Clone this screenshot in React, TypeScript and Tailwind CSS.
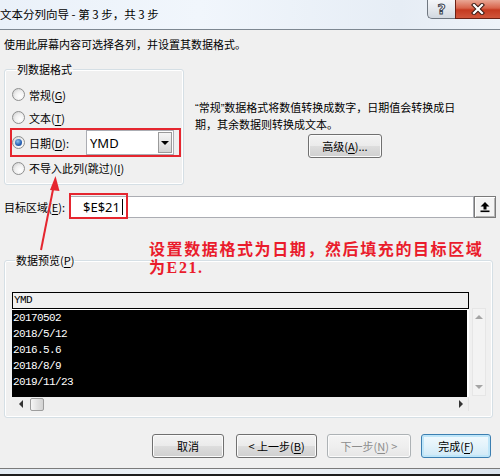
import React from 'react';

const U = ({ children }: { children: React.ReactNode }) => (
  <span className="underline underline-offset-[2px] decoration-1">{children}</span>
);

const Radio = ({ checked }: { checked?: boolean }) => (
  <span className="w-[13px] h-[13px] rounded-full border border-[#8e8f8f] bg-[radial-gradient(circle_at_65%_65%,#ffffff,#f1f1f1_45%,#c9c9c9)] flex items-center justify-center shrink-0">
    {checked && (
      <span className="w-[7px] h-[7px] rounded-full bg-[radial-gradient(circle_at_40%_35%,#8fc3ec,#2a64b7_55%,#17418a)]" />
    )}
  </span>
);

const btn =
  'h-[24px] flex items-center justify-center rounded-[3px] border text-[11px] leading-[14px] shadow-[inset_0_0_0_1px_#fbfbfb]';
const btnFace = 'bg-[linear-gradient(#f3f3f3,#ebebeb_48%,#dddddd_52%,#cfcfcf)] border-[#707070] text-black';

const Tri = ({ dir, color }: { dir: 'up' | 'down' | 'left' | 'right'; color: string }) => {
  const pts = {
    up: '0,4 4,0 8,4',
    down: '0,0 8,0 4,4',
    left: '4,0 4,8 0,4',
    right: '0,0 0,8 4,4',
  }[dir];
  const vb = dir === 'up' || dir === 'down' ? '0 0 8 4' : '0 0 4 8';
  const cls = dir === 'up' || dir === 'down' ? 'w-[8px] h-[4px]' : 'w-[4px] h-[8px]';
  return (
    <svg viewBox={vb} className={cls}>
      <polygon points={pts} fill={color} />
    </svg>
  );
};

export default function App() {
  const rows = ['20170502', '2018/5/12', '2016.5.6', '2018/8/9', '2019/11/23'];

  return (
    <div className="w-[500px] h-[476px] relative overflow-hidden bg-[#f0f0f0] flex flex-col font-['Noto_Sans_CJK_SC',sans-serif] text-black">
      {/* title bar */}
      <div className="h-[30px] shrink-0 border-b border-[#7d8791] bg-[linear-gradient(to_right,#eaf1f9,#f1f6fc_40%,#e6edf5_80%,#eef3f9)] flex items-start relative">
        <div className="text-[11.5px] leading-[16px] mt-[6px] whitespace-nowrap">文本分列向导 - 第 3 步，共 3 步</div>
        <div className="ml-auto flex">
          <div className="w-[28px] h-[19px] rounded-bl-[5px] border-l border-b border-[#6f7780] bg-[linear-gradient(#f4f6f9,#e4e8ed_50%,#d2d8df)] flex items-center justify-center">
            <span className="text-[14px] leading-[14px] font-bold text-white font-['DejaVu_Sans',sans-serif] [-webkit-text-stroke:1px_#3c4450]">?</span>
          </div>
          <div className="w-[45px] h-[19px] border-l border-b border-[#6b2114] bg-[linear-gradient(#e9a795,#d8644b_45%,#c53a20_55%,#d0563b)] flex items-center justify-center">
            <svg viewBox="0 0 14 12" className="w-[14px] h-[12px]">
              <path d="M3 2 L11 10 M11 2 L3 10" stroke="#3a1a14" strokeWidth="4.2" strokeLinecap="square" />
              <path d="M3 2 L11 10 M11 2 L3 10" stroke="#ffffff" strokeWidth="2.2" strokeLinecap="square" />
            </svg>
          </div>
        </div>
      </div>

      {/* body */}
      <div className="flex-1 px-[4px] flex flex-col">
        <div className="mt-[6px] text-[11px] leading-[16px] whitespace-nowrap">使用此屏幕内容可选择各列，并设置其数据格式。</div>

        <div className="mt-[9px] flex">
          <fieldset className="w-[180px] h-[124px] border border-[#d5dfe5] rounded-[3px] pl-[7px] pt-[6px] shadow-[inset_0_0_0_1px_#ffffff]">
            <legend className="ml-[4px] px-[1px] text-[11px] leading-[16px]">列数据格式</legend>
            <div className="h-[23px] flex items-center">
              <Radio />
              <span className="ml-[4px] text-[11px] leading-[14px]">常规(<U>G</U>)</span>
            </div>
            <div className="h-[23px] flex items-center">
              <Radio />
              <span className="ml-[4px] text-[11px] leading-[14px]">文本(<U>T</U>)</span>
            </div>
            <div className="h-[27px] flex items-center relative">
              <Radio checked />
              <span className="ml-[4px] w-[57px] text-[11px] leading-[14px]">日期(<U>D</U>):</span>
              <div className="w-[88px] h-[25px] border border-[#abadb3] bg-white flex items-center">
                <span className="ml-[3px] text-[13px] leading-[16px] font-['Noto_Sans',sans-serif]">YMD</span>
                <div className="ml-auto mr-[1px] w-[14px] h-[21px] border border-[#9a9a9a] bg-[linear-gradient(#f5f5f5,#e6e6e6_50%,#d4d4d4)] flex items-center justify-center">
                  <Tri dir="down" color="#000" />
                </div>
              </div>
              <div className="absolute -left-[2px] -top-[1px] w-[171px] h-[29px] border-2 border-[#e5262f]" />
            </div>
            <div className="h-[24px] flex items-center">
              <Radio />
              <span className="ml-[4px] text-[11px] leading-[14px] whitespace-nowrap">不导入此列(跳过)(<U>I</U>)</span>
            </div>
          </fieldset>

          <div className="ml-[11px] flex flex-col">
            <div className="mt-[38px] text-[11px] leading-[16px] whitespace-nowrap">
              <span className="font-['Liberation_Sans',sans-serif]">“</span>常规<span className="font-['Liberation_Sans',sans-serif]">”</span>数据格式将数值转换成数字，日期值会转换成日
              <br />
              期，其余数据则转换成文本。
            </div>
            <div className={`${btn} ${btnFace} mt-[2px] ml-[113px] w-[74px]`}>
              高级(<U>A</U>)...
            </div>
          </div>
        </div>

        {/* target range */}
        <div className="mt-[11px] h-[22px] flex items-center">
          <span className="w-[66px] text-[11px] leading-[14px] whitespace-nowrap">目标区域(<U>E</U>):</span>
          <div className="flex-1 h-[22px] relative border border-[#abadb3] bg-white flex items-center">
            <span className="ml-[12px] text-[13px] leading-[16px] font-['Noto_Sans',sans-serif]">$E$21</span>
            <span className="ml-[2px] w-[1px] h-[16px] bg-black" />
            <div className="absolute -left-[2px] -top-[4px] w-[59px] h-[26px] border-2 border-[#e5262f]" />
          </div>
          <div className="w-[22px] h-[22px] border border-[#7a7a7a] bg-[#f4f4f4] shadow-[inset_1px_1px_0_#ffffff,inset_-1px_-1px_0_#b5b5b5] flex items-center justify-center">
            <svg viewBox="0 0 12 12" className="w-[12px] h-[12px]">
              <polygon points="6,1 10.5,5.5 7.5,5.5 7.5,8.5 4.5,8.5 4.5,5.5 1.5,5.5" fill="#000" />
              <rect x="1.5" y="9.5" width="9" height="1.6" fill="#000" />
            </svg>
          </div>
        </div>

        {/* preview */}
        <fieldset className="mt-[34px] w-[489px] h-[166px] border border-[#d5dfe5] rounded-[3px] pl-[7px] pt-[24px] shadow-[inset_0_0_0_1px_#ffffff]">
          <legend className="ml-[3px] px-[1px] text-[11px] leading-[16px]">数据预览(<U>P</U>)</legend>
          <div className="flex">
            <div className="w-[457px] flex flex-col">
              <div className="h-[17px] border border-black bg-[#f0f0f0] pl-[1px] text-[11px] leading-[15px] tracking-[-0.6px] font-['Liberation_Mono',monospace]">
                YMD
              </div>
              <div className="bg-white pt-[1px] pr-[2px]">
                <div className="h-[87px] bg-black text-white pl-[1px] text-[11px] leading-[16px] tracking-[-0.6px] font-['Liberation_Mono',monospace]">
                  {rows.map((r) => (
                    <div key={r}>{r}</div>
                  ))}
                </div>
              </div>
              <div className="h-[14px] bg-[#efefef] border-r border-[#e4e4e4] flex items-center">
                <div className="ml-[7px]">
                  <Tri dir="left" color="#333" />
                </div>
                <div className="ml-[7px] w-[14px] h-[13px] rounded-[2px] border border-[#9d9d9d] bg-[linear-gradient(to_right,#f6f6f6,#e3e3e3_50%,#d3d3d3)]" />
                <div className="ml-auto mr-[5px]">
                  <Tri dir="right" color="#333" />
                </div>
              </div>
            </div>
            <div className="ml-[3px] mt-[16px] w-[14px] h-[88px] bg-[#f3f3f3] border border-[#e6e6e6] flex flex-col items-center justify-between py-[6px]">
              <Tri dir="up" color="#a5a5a5" />
              <Tri dir="down" color="#a5a5a5" />
            </div>
          </div>
        </fieldset>

        {/* buttons */}
        <div className="mt-[16px] flex justify-end pr-[5px]">
          <div className={`${btn} ${btnFace} w-[72px]`}>取消</div>
          <div className={`${btn} ${btnFace} ml-[12px] w-[81px]`}>&lt; 上一步(<U>B</U>)</div>
          <div className={`${btn} ml-[10px] w-[84px] border-[#adb2b5] bg-[linear-gradient(#f4f4f4,#efefef_50%,#e6e6e6)] text-[#8d8d8d]`}>
            下一步(<U>N</U>) &gt;
          </div>
          <div className={`${btn} ml-[10px] w-[70px] border-[#3c7fb1] bg-[linear-gradient(#f1f9fd,#e3f3fb_50%,#cfe9f7)] shadow-[inset_0_0_0_2px_#bfe6f9] text-black`}>
            完成(<U>F</U>)
          </div>
        </div>
      </div>

      {/* window bottom frame */}
      <div className="h-[8px] shrink-0 border-t border-[#7b7b7b] bg-[linear-gradient(to_right,#e3ebf3,#f0f4f8,#dbe4ee)] border-b-2 border-b-[#1e1e1e]" />

      {/* annotations */}
      <svg viewBox="0 0 40 90" className="absolute left-[30px] top-[170px] w-[40px] h-[90px] pointer-events-none">
        <line x1="11" y1="80" x2="23.5" y2="17" stroke="#e5262f" strokeWidth="2" />
        <polygon points="25.5,6 20,20 29.5,21" fill="#e5262f" />
      </svg>
      <div className="absolute left-[149px] top-[239px] flex flex-col text-[16px] leading-[18px] font-bold tracking-[1.6px] text-[#ea1c2c] whitespace-nowrap">
        <div className="h-[18px]">设置数据格式为日期，然后填充的目标区域</div>
        <div className="h-[18px]">
          为<span className="font-['Liberation_Serif',serif]">E21.</span>
        </div>
      </div>
    </div>
  );
}
